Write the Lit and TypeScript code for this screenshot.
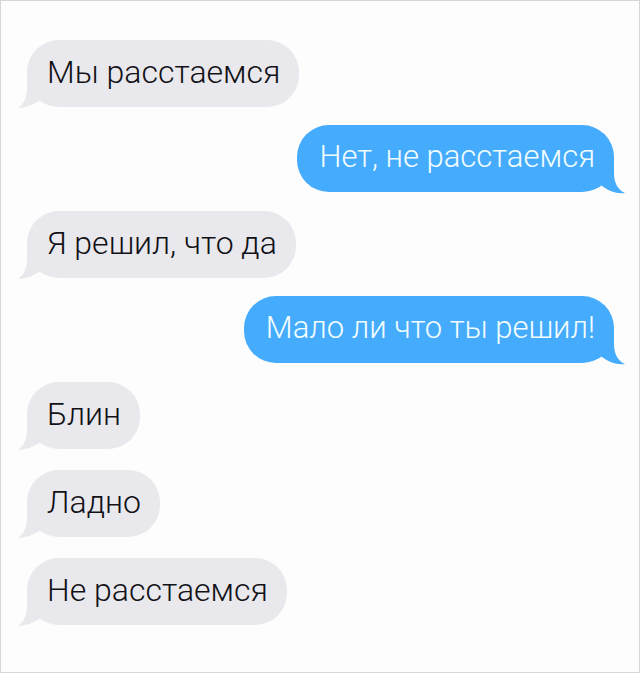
import { LitElement, html, css } from "lit";
import { customElement, property } from "lit/decorators.js";

interface Message {
  text: string;
  side: "in" | "out";
}

const messages: Message[] = [
  { text: "Мы расстаемся", side: "in" },
  { text: "Нет, не расстаемся", side: "out" },
  { text: "Я решил, что да", side: "in" },
  { text: "Мало ли что ты решил!", side: "out" },
  { text: "Блин", side: "in" },
  { text: "Ладно", side: "in" },
  { text: "Не расстаемся", side: "in" },
];

@customElement("chat-bubble")
export class ChatBubble extends LitElement {
  @property({ reflect: true }) side: "in" | "out" = "in";

  static styles = css`
    :host {
      display: block;
      position: relative;
      box-sizing: border-box;
      max-width: 100%;
      padding: 13px 19px 16px 20px;
      border-radius: 32px;
      background: #e9e8ed;
      color: #111116;
      font: 300 32px/38px Roboto, "Noto Sans", sans-serif;
    }
    :host([side="out"]) {
      padding: 13px 19px 16px 22px;
      background: #45abfc;
      color: #f2fdff;
      font-size: 31px;
    }
    .tail {
      position: absolute;
      left: -9px;
      bottom: -2px;
      width: 42px;
      height: 36px;
      fill: #e9e8ed;
    }
    :host([side="out"]) .tail {
      left: auto;
      right: -11px;
      transform: scaleX(-1);
      fill: #45abfc;
    }
    .text {
      position: relative;
      margin: 0;
    }
  `;

  render() {
    const shape =
      this.side === "in"
        ? "M9 0V15C9 24 6 31 0 35C8 35 14 32 21 28L40 12V0Z"
        : "M11 0V15C11 25 7 32 0 35C9 36 16 33 23 28L40 12V0Z";
    return html`
      <svg class="tail" viewBox="0 0 42 36" aria-hidden="true"><path d=${shape} /></svg>
      <p class="text"><slot></slot></p>
    `;
  }
}

@customElement("app-root")
export class AppRoot extends LitElement {
  static styles = css`
    :host {
      display: block;
      box-sizing: border-box;
      min-height: 100vh;
      padding: 39px 25px 47px 26px;
      border: 1px solid #d6d6d8;
      background: #fdfdfd;
    }
    .thread {
      display: flex;
      flex-direction: column;
      align-items: flex-start;
    }
    .in + .in {
      margin-top: 21px;
    }
    .in + .out {
      margin-top: 18px;
    }
    .out + .in {
      margin-top: 19px;
    }
    .out {
      align-self: flex-end;
    }
  `;

  render() {
    return html`
      <main class="thread">
        ${messages.map(
          (m) => html`<chat-bubble class=${m.side} side=${m.side}>${m.text}</chat-bubble>`
        )}
      </main>
    `;
  }
}
